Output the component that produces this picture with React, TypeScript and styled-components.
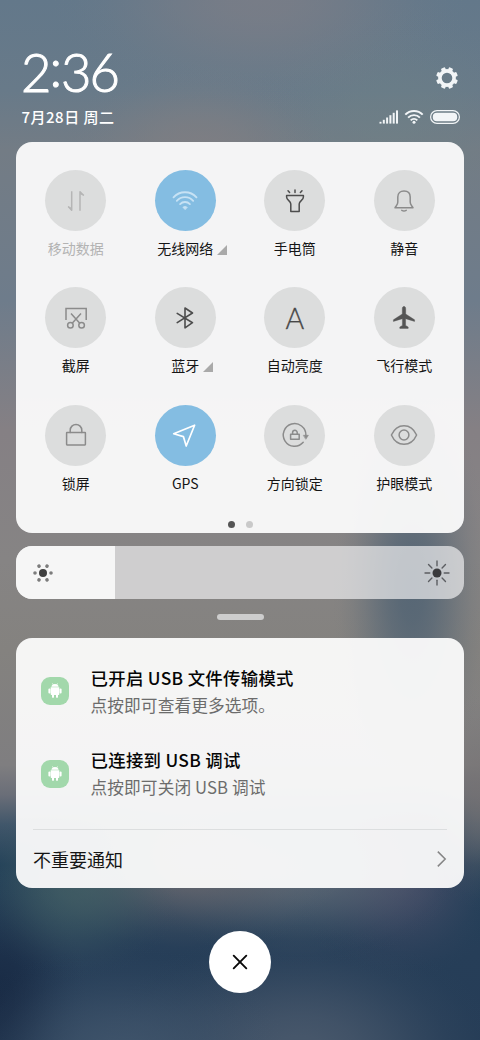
import React from "react";
import styled, { createGlobalStyle } from "styled-components";

const GlobalStyle = createGlobalStyle`
  * { box-sizing: border-box; }
  body { margin: 0; }
`;

/* A soft colour patch of the wallpaper: bell-shaped falloff instead of a hard cone. */
const patch = (x: number, y: number, rx: number, ry: number, rgb: string, alpha: number) => {
  const stops = [0, 0.15, 0.3, 0.45, 0.6, 0.75, 0.9, 1].map((t) => {
    const a = alpha * Math.pow(Math.cos((t * Math.PI) / 2), 2);
    return `rgba(${rgb}, ${a.toFixed(3)}) ${t * 100}%`;
  });
  return `radial-gradient(ellipse ${rx}px ${ry}px at ${x}px ${y}px, ${stops.join(", ")})`;
};

const wallpaper = [
  patch(260, 0, 210, 110, "126, 126, 134", 0.75),
  patch(200, 150, 140, 90, "130, 127, 130", 0.7),
  patch(390, 120, 150, 120, "110, 130, 134", 0.45),
  patch(412, 590, 80, 210, "76, 96, 114", 0.8),
  patch(480, 800, 60, 110, "118, 114, 114", 0.7),
  patch(75, 885, 110, 95, "70, 98, 102", 0.75),
  patch(185, 862, 160, 95, "108, 106, 112", 0.9),
  patch(300, 870, 160, 95, "98, 108, 120", 0.85),
  patch(400, 875, 110, 105, "78, 80, 106", 0.75),
  patch(120, 1055, 170, 110, "70, 90, 112", 0.75),
  patch(300, 1055, 200, 130, "80, 94, 112", 0.8),
  patch(0, 1000, 90, 140, "20, 36, 62", 0.7),
  `linear-gradient(#63788a 0, #687a89 90px, #737c85 150px, #6e7c8b 300px, #858084 430px,
    #868484 560px, #84827f 650px, #7f7e80 765px, #6a6e78 795px, #40566a 825px, #213f58 865px,
    #263e58 950px, #263d57 1040px)`,
].join(", ");

const Screen = styled.main`
  width: 480px;
  height: 1040px;
  overflow: hidden;
  display: flex;
  flex-direction: column;
  align-items: center;
  font-family: "Noto Sans CJK SC", "Noto Sans", sans-serif;
  color: #151515;
  background: ${wallpaper};
`;

const Header = styled.header`
  width: 100%;
  height: 142px;
  padding: 44px 20px 0 21px;
  display: flex;
  justify-content: space-between;
  color: #fff;
`;

const ClockBlock = styled.div`
  display: flex;
  flex-direction: column;
`;

const Clock = styled.div`
  height: 56px;
  font: 300 52.5px/56px Lato, sans-serif;
  letter-spacing: -2px;
  -webkit-text-stroke: 1px #fff;
  white-space: nowrap;
`;

const Colon = styled.span`
  display: inline-block;
  transform: translateY(-5.5px);
  margin: 0 1px 0 0;
`;

const DateText = styled.div`
  margin: 7px 0 0 0.5px;
  font-size: 15px;
  line-height: 20px;
  font-weight: 500;
  letter-spacing: 0.5px;
  white-space: nowrap;
`;

const StatusBlock = styled.div`
  display: flex;
  flex-direction: column;
  align-items: flex-end;
  padding-top: 23px;
`;

const GearSlot = styled.div`
  height: 24px;
  margin-right: 2.5px;
`;

const StatusRow = styled.div`
  display: flex;
  align-items: center;
  gap: 7px;
  margin-top: 18.5px;
  height: 15px;
`;

const Glyph = styled.svg`
  display: block;
  flex: none;
  overflow: visible;
`;

const Card = styled.section`
  width: 448px;
  flex: none;
  border-radius: 16px;
  background: rgba(251, 251, 251, 0.95);
`;

const ToggleCard = styled(Card)`
  height: 391px;
  padding: 28px 5px 0;
`;

const ToggleGrid = styled.div`
  display: grid;
  grid-template-columns: repeat(4, 1fr);
  grid-auto-rows: 117.3px;
`;

const Toggle = styled.div`
  display: flex;
  flex-direction: column;
  align-items: center;
`;

const Disc = styled.div<{ $on?: boolean }>`
  width: 61px;
  height: 61px;
  border-radius: 50%;
  background: ${(p) => (p.$on ? "#84bde2" : "#dcdddd")};
  display: flex;
  align-items: center;
  justify-content: center;
`;

const Letter = styled.span`
  font: 300 28.5px/30px Lato, sans-serif;
  -webkit-text-stroke: 0.3px #484848;
  color: #484848;
`;

const Label = styled.div<{ $dim?: boolean }>`
  position: relative;
  margin-top: 7px;
  font-size: 14px;
  line-height: 20px;
  white-space: nowrap;
  color: ${(p) => (p.$dim ? "#b3b3b3" : "#151515")};
`;

const Corner = styled.svg`
  position: absolute;
  left: calc(100% + 4px);
  top: 6.5px;
`;

const Dots = styled.div`
  display: flex;
  justify-content: center;
  gap: 11px;
  margin-top: -1px;
`;

const Dot = styled.i<{ $active?: boolean }>`
  width: 7px;
  height: 7px;
  border-radius: 50%;
  background: ${(p) => (p.$active ? "#555" : "#c9c9c9")};
`;

const Slider = styled.div`
  width: 448px;
  height: 53px;
  flex: none;
  margin-top: 13px;
  border-radius: 16px;
  overflow: hidden;
  display: flex;
  background: rgba(238, 238, 240, 0.7);
`;

const SliderFill = styled.div`
  width: 99px;
  background: #f6f6f6;
  display: flex;
  align-items: center;
  padding-left: 15px;
`;

const SliderRest = styled.div`
  flex: 1;
  display: flex;
  align-items: center;
  justify-content: flex-end;
  padding-right: 15px;
`;

const Handle = styled.div`
  width: 47px;
  height: 6px;
  flex: none;
  margin: 15px 0 17.5px;
  border-radius: 3px;
  background: #cdcdcd;
`;

const NoticeCard = styled(Card)`
  height: 250.5px;
  padding: 26px 17px 0;
`;

const Notice = styled.div`
  height: 82.8px;
  padding-left: 8px;
  display: flex;
  gap: 21.5px;
`;

const AppIcon = styled.div`
  width: 28px;
  height: 28px;
  margin-top: 13.5px;
  border-radius: 9px;
  background: #a2d8ab;
`;

const NoticeTitle = styled.div`
  font-size: 17.4px;
  line-height: 28px;
  letter-spacing: 0.3px;
  font-weight: 500;
  color: #050505;
  white-space: nowrap;
`;

const NoticeText = styled.div`
  font-size: 16.7px;
  line-height: 26px;
  letter-spacing: 0.1px;
  color: #6c6c6c;
  white-space: nowrap;
`;

const More = styled.div`
  height: 58px;
  border-top: 1px solid #dcdedf;
  display: flex;
  align-items: center;
  justify-content: space-between;
  padding: 0 1px 0 0;
  font-size: 18px;
`;

const CloseButton = styled.div`
  width: 62px;
  height: 62px;
  flex: none;
  margin-top: 43px;
  border-radius: 50%;
  background: #fff;
  display: flex;
  align-items: center;
  justify-content: center;
`;

type IconProps = { color: string; width?: number; children: React.ReactNode };

const Icon = ({ color, width = 1.5, children }: IconProps) => (
  <Glyph
    width="30"
    height="30"
    viewBox="-15 -15 30 30"
    fill="none"
    stroke={color}
    strokeWidth={width}
    strokeLinecap="round"
    strokeLinejoin="round"
  >
    {children}
  </Glyph>
);

const GRAY = "#8b8b8b";
const DARK = "#4d4d4d";

const toggles: { label: string; on?: boolean; dim?: boolean; more?: boolean; icon: React.ReactNode }[] = [
  {
    label: "移动数据",
    dim: true,
    icon: (
      <Icon color="#b5b5b5">
        <path d="M-4.3-9.7V9.3L-7.8 5.6M4 9.7V-9.3L7.8-5.4" strokeLinecap="butt" />
        <path d="M-8 5.3L-4.3 6.8V9.6ZM4-9.6V-6.8L8-5.2Z" fill="#b5b5b5" stroke="none" />
      </Icon>
    ),
  },
  {
    label: "无线网络",
    on: true,
    more: true,
    icon: (
      <Icon color="#c7e2f4" width={1.8}>
        <path d="M-11.5-3.6A15.4 15.4 0 0 1 11.5-3.6M-8.2-.2A11 11 0 0 1 8.2-.2M-4.9 3.1A6.8 6.8 0 0 1 4.9 3.1" />
        <path d="M0 8.6L-2.2 6.2Q0 4.4 2.2 6.2Z" fill="#c7e2f4" strokeWidth="0.6" />
      </Icon>
    ),
  },
  {
    label: "手电筒",
    icon: (
      <Icon color={DARK} width={1.5}>
        <path d="M-8.4-5.6H8.4V-4C8.4-.5 4.2-.2 4.2 3V10.5H-4.2V3C-4.2-.2-8.4-.5-8.4-4ZM0-11V-8.6M-7-10.3L-5.4-8.5M7-10.3L5.4-8.5" />
      </Icon>
    ),
  },
  {
    label: "静音",
    icon: (
      <Icon color={GRAY}>
        <path d="M-9 6.7H9C8 4.6 6.2 4.2 6.2 1V-4C6.2-7.8 3.6-10 0-10S-6.2-7.8-6.2-4V1C-6.2 4.2-8 4.6-9 6.7ZM-2.2 9.4Q0 10.6 2.2 9.4" />
      </Icon>
    ),
  },
  {
    label: "截屏",
    icon: (
      <Icon color={GRAY}>
        <path d="M-10 2V-9.6H10.2V2M-5-4.4L3.8 5.2M5-4.4L-3.8 5.2" strokeLinejoin="miter" strokeLinecap="butt" />
        <circle cx="-5.6" cy="7.2" r="2.8" />
        <circle cx="5.6" cy="7.2" r="2.8" />
      </Icon>
    ),
  },
  {
    label: "蓝牙",
    more: true,
    icon: (
      <Icon color={DARK} width={1.6}>
        <path d="M-7.8-4.6L7.5 4.7L0 9.8V-10L7.5-5L-7.8 4.6" />
      </Icon>
    ),
  },
  { label: "自动亮度", icon: <Letter>A</Letter> },
  {
    label: "飞行模式",
    icon: (
      <Icon color="#555" width={0.4}>
        <path
          d="M0-11.4C-1.2-11.4-1.7-10.6-1.7-9.2V-4L-10.6 1.8V3.4L-1.6.7V7.4L-4.2 9V10.4H4.2V9L1.6 7.4V.7L10.6 3.4V1.8L1.7-4V-9.2C1.7-10.6 1.2-11.4 0-11.4Z"
          fill="#555"
        />
      </Icon>
    ),
  },
  {
    label: "锁屏",
    icon: (
      <Icon color={GRAY}>
        <rect x="-9.4" y="-2.4" width="18.8" height="12.3" rx="0.4" />
        <path d="M-5.8-2.6V-4.8A5.8 5.8 0 0 1 5.8-4.8V-2.6" />
      </Icon>
    ),
  },
  {
    label: "GPS",
    on: true,
    icon: (
      <Icon color="#fff" width={1.7}>
        <path d="M-11.3-1.2L9.6-9.8L1.2 11L-1.6 1.6Z" />
      </Icon>
    ),
  },
  {
    label: "方向锁定",
    icon: (
      <Icon color={GRAY}>
        <path d="M8.2 7.3A11.3 11.3 0 1 1 10.9.2" />
        <path d="M8.6.3H13.4L11 4Z" fill={GRAY} strokeWidth="0.6" />
        <rect x="-4.4" y="-.7" width="8.6" height="4.9" />
        <path d="M-2.4-.8V-2.4A2.3 2.3 0 0 1 2.2-2.4V-.8" />
      </Icon>
    ),
  },
  {
    label: "护眼模式",
    icon: (
      <Icon color={GRAY}>
        <path d="M-12.6 0C-10-5.8-5.4-9.3 0-9.3S10-5.8 12.6 0C10 5.8 5.4 9.3 0 9.3S-10 5.8-12.6 0Z" />
        <circle r="4.9" />
      </Icon>
    ),
  },
];

const Gear = () => (
  <Glyph width="22" height="22" viewBox="-11 -11 22 22">
    <circle r="7.1" fill="none" stroke="#f2f5f7" strokeWidth="3.6" />
    {[0, 1, 2, 3, 4, 5, 6, 7].map((i) => (
      <rect
        key={i}
        x="-2.2"
        y="-10.9"
        width="4.4"
        height="3.6"
        rx="1"
        fill="#f2f5f7"
        transform={`rotate(${22.5 + i * 45})`}
      />
    ))}
  </Glyph>
);

const Signal = () => (
  <Glyph width="18" height="14" viewBox="0 0 18 14" fill="#f2f5f7">
    {[1.8, 3.8, 6.1, 8.4, 10.8, 13.2].map((h, i) => (
      <rect key={h} x={i * 3.3 - 0.5} y={13.6 - h} width="2" height={h} />
    ))}
  </Glyph>
);

const Wifi = () => (
  <Glyph width="18" height="14" viewBox="-9 -7 18 14" fill="none" stroke="#f2f5f7" strokeWidth="1.9">
    <path d="M-8.7-2.3A12 12 0 0 1 8.7-2.3M-5.9.7A8 8 0 0 1 5.9.7M-3.3 3.3A4.6 4.6 0 0 1 3.3 3.3" />
    <circle cy="5.2" r="1.5" fill="#f2f5f7" stroke="none" />
  </Glyph>
);

const Battery = () => (
  <Glyph width="30" height="14" viewBox="0 0 30 14">
    <rect x="0.6" y="0.6" width="28.8" height="12.8" rx="6.4" fill="none" stroke="#f2f5f7" strokeWidth="1.2" />
    <rect x="2.8" y="2.7" width="24.4" height="8.6" rx="4" fill="#f2f5f7" />
  </Glyph>
);

const DimSun = () => (
  <Glyph width="24" height="24" viewBox="-12 -12 24 24">
    <circle r="4" fill="#404040" />
    {[0, 60, 120, 180, 240, 300].map((a) => (
      <circle key={a} cx="8" r="1.8" fill="#7c7c7c" transform={`rotate(${a})`} />
    ))}
  </Glyph>
);

const BrightSun = () => (
  <Glyph width="24" height="24" viewBox="-12 -12 24 24">
    <circle r="4.5" fill="#3b3b3e" />
    {[0, 45, 90, 135, 180, 225, 270, 315].map((a) => (
      <path key={a} d="M7.2 0H12" stroke="#5c5e62" strokeWidth="1.4" strokeLinecap="round" transform={`rotate(${a})`} />
    ))}
  </Glyph>
);

const Robot = () => (
  <Glyph width="28" height="28" viewBox="-14 -14 28 28" fill="#fff">
    <path d="M-3.6-4.2C-3.6-6.1-2.1-7.1 0-7.1S3.6-6.1 3.6-4.2Z" />
    <path d="M-2.6-7.7L-1.5-6M2.6-7.7L1.5-6" stroke="#fff" strokeWidth="0.6" />
    <path d="M-4.3-3.8H4.3V3.2Q4.3 4 3.5 4H3V5.9Q3 6.8 2 6.8T1 5.9V4H-1V5.9Q-1 6.8-2 6.8T-3 5.9V4H-3.5Q-4.3 4-4.3 3.2Z" />
    <rect x="-6.6" y="-2.6" width="2.1" height="5" rx="1" />
    <rect x="4.5" y="-2.6" width="2.1" height="5" rx="1" />
  </Glyph>
);

const notices = [
  { title: "已开启 USB 文件传输模式", text: "点按即可查看更多选项。" },
  { title: "已连接到 USB 调试", text: "点按即可关闭 USB 调试" },
];

export default function App() {
  return (
    <Screen>
      <GlobalStyle />
      <Header>
        <ClockBlock>
          <Clock>
            2<Colon>:</Colon>36
          </Clock>
          <DateText>7月28日 周二</DateText>
        </ClockBlock>
        <StatusBlock>
          <GearSlot>
            <Gear />
          </GearSlot>
          <StatusRow>
            <Signal />
            <Wifi />
            <Battery />
          </StatusRow>
        </StatusBlock>
      </Header>

      <ToggleCard>
        <ToggleGrid>
          {toggles.map((t) => (
            <Toggle key={t.label}>
              <Disc $on={t.on}>{t.icon}</Disc>
              <Label $dim={t.dim}>
                {t.label}
                {t.more && (
                  <Corner width="10" height="10" viewBox="0 0 10 10">
                    <path d="M10 0V10H0Z" fill="#a9a9a9" />
                  </Corner>
                )}
              </Label>
            </Toggle>
          ))}
        </ToggleGrid>
        <Dots>
          <Dot $active />
          <Dot />
        </Dots>
      </ToggleCard>

      <Slider>
        <SliderFill>
          <DimSun />
        </SliderFill>
        <SliderRest>
          <BrightSun />
        </SliderRest>
      </Slider>

      <Handle />

      <NoticeCard>
        {notices.map((n) => (
          <Notice key={n.title}>
            <AppIcon>
              <Robot />
            </AppIcon>
            <div>
              <NoticeTitle>{n.title}</NoticeTitle>
              <NoticeText>{n.text}</NoticeText>
            </div>
          </Notice>
        ))}
        <More>
          不重要通知
          <Glyph width="9" height="16" viewBox="0 0 9 16" fill="none" stroke="#858585" strokeWidth="1.5">
            <path d="M.8.6L8.2 8L.8 15.4" />
          </Glyph>
        </More>
      </NoticeCard>

      <CloseButton>
        <Glyph width="14" height="14" viewBox="0 0 14 14" stroke="#080808" strokeWidth="1.9" strokeLinecap="round">
          <path d="M.7.7L13.3 13.3M13.3.7L.7 13.3" />
        </Glyph>
      </CloseButton>
    </Screen>
  );
}
